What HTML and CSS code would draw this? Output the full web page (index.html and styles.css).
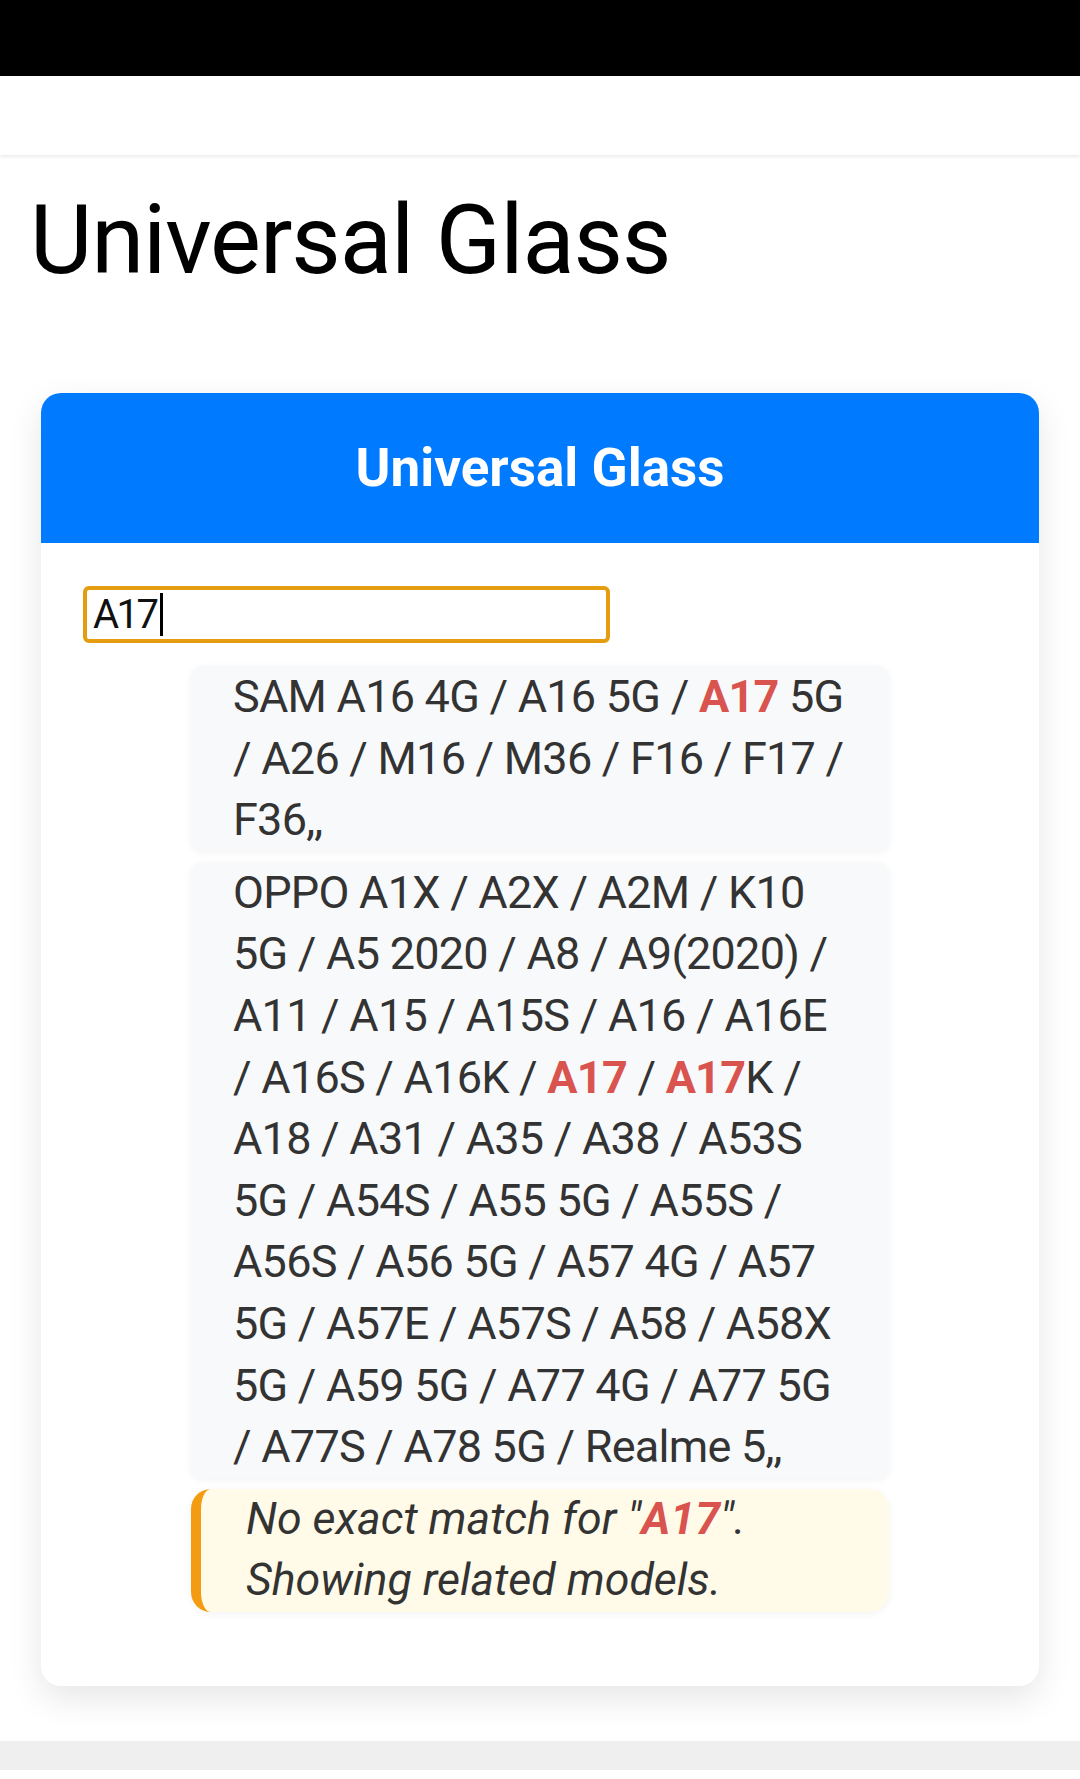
FILE: index.html
```html
<!DOCTYPE html>
<html lang="en">
<head>
<meta charset="utf-8">
<title>Universal Glass</title>
<link rel="stylesheet" href="styles.css">
</head>
<body>
<div class="status-bar"></div>
<div class="top-bar"></div>
<h1 class="page-title">Universal Glass</h1>
<div class="card">
  <div class="card-header">Universal Glass</div>
  <div class="card-body">
    <div class="search-box"><span class="search-text">A17</span><span class="caret"></span></div>
    <div class="results">
      <div class="result-item">SAM A16 4G / A16 5G / <b class="hl">A17</b> 5G / A26 / M16 / M36 / F16 / F17 / F36,,</div>
      <div class="result-item">OPPO A1X / A2X / A2M / K10 5G / A5 2020 / A8 / A9(2020) / A11 / A15 / A15S / A16 / A16E / A16S / A16K / <b class="hl">A17</b> / <b class="hl">A17</b>K / A18 / A31 / A35 / A38 / A53S 5G / A54S / A55 5G / A55S / A56S / A56 5G / A57 4G / A57 5G / A57E / A57S / A58 / A58X 5G / A59 5G / A77 4G / A77 5G / A77S / A78 5G / Realme 5,,</div>
      <div class="notice">No exact match for "<b class="hl">A17</b>". Showing related models.</div>
    </div>
  </div>
</div>
<div class="footer-bar"></div>
</body>
</html>
```
FILE: styles.css
```css
html, body {
  margin: 0;
  padding: 0;
  background: #ffffff;
  font-family: Roboto, "Noto Sans", "Liberation Sans", sans-serif;
  color: #000;
}

.status-bar {
  height: 76px;
  background: #000;
}

.top-bar {
  height: 79px;
  background: #fff;
  box-shadow: 0 2px 3px rgba(0, 0, 0, 0.08);
  position: relative;
}

.page-title {
  margin: 29px 0 0 0;
  padding-left: 30px;
  font-size: 96px;
  font-weight: 400;
  letter-spacing: -1.1px;
  line-height: 112px;
  color: #000;
}

.card {
  margin: 97px 41px 0 41px;
  background: #fff;
  border-radius: 20px;
  box-shadow: 0 12px 34px rgba(0, 0, 0, 0.1);
  overflow: hidden;
}

.card-header {
  height: 150px;
  background: #007bff;
  color: #fff;
  font-size: 53px;
  font-weight: 700;
  display: flex;
  align-items: center;
  justify-content: center;
}

.card-body {
  padding: 43px 42px 74px 42px;
}

.search-box {
  width: 507px;
  height: 49px;
  border: 4px solid #e49d10;
  border-radius: 6px;
  padding: 0 6px;
  display: flex;
  align-items: center;
  font-size: 40px;
  letter-spacing: -2.5px;
  line-height: 49px;
  color: #111;
}

.caret {
  display: inline-block;
  width: 3px;
  height: 43px;
  background: #000;
  margin-left: 3px;
}

.results {
  width: 698px;
  margin: 23px auto 0 auto;
  display: flex;
  flex-direction: column;
  gap: 11px;
}

.result-item {
  background: #f8f9fa;
  border-radius: 12px;
  box-shadow: 0 2px 8px rgba(0, 0, 0, 0.05);
  padding: 0 42px 0 42px;
  font-size: 45px;
  letter-spacing: -0.75px;
  line-height: 61.6px;
  color: #333;
}

.hl {
  color: #d9534f;
  font-weight: 700;
}

.notice {
  background: #fffbe8;
  border-left: 10px solid #f39c12;
  border-radius: 20px;
  box-shadow: 0 2px 8px rgba(0, 0, 0, 0.05);
  padding: 0 36px 0 45px;
  font-size: 44.7px;
  font-style: italic;
  line-height: 61.6px;
  color: #333;
}

.footer-bar {
  height: 29px;
  margin-top: 55px;
  background: #efefef;
}
```
